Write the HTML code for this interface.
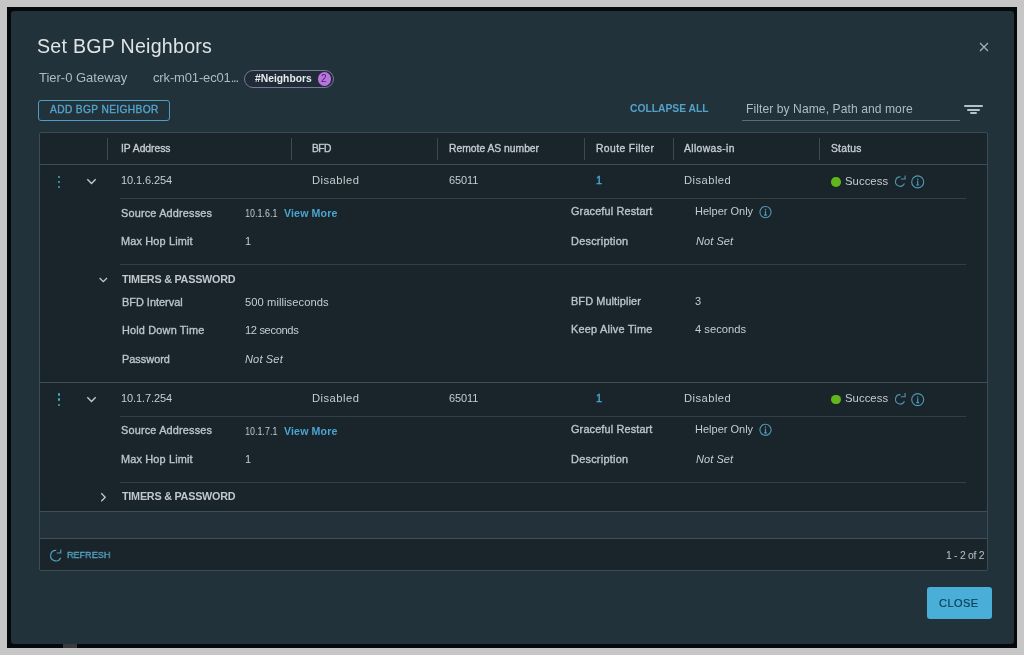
<!DOCTYPE html>
<html><head><meta charset="utf-8"><style>
html,body{margin:0;padding:0;}
body{width:1024px;height:655px;position:relative;overflow:hidden;background:#c6c6c6;font-family:"Liberation Sans",sans-serif;}
.t{position:absolute;line-height:1;white-space:nowrap;will-change:transform;}
.r{position:absolute;}
</style></head><body>
<div class="r" style="left:7px;top:7px;width:1010px;height:641px;background:#06090b;"></div>
<div class="r" style="left:11px;top:11px;width:1003px;height:632.5px;background:#22323a;border-radius:3px;"></div>
<div class="r" style="left:62.5px;top:643.5px;width:14.5px;height:4px;background:#3b3b3c;"></div>
<div class="t" style="left:37.00px;top:36.91px;font-size:19.6px;color:#dfe4e7;font-weight:normal;letter-spacing:0.268px;font-style:normal;">Set BGP Neighbors</div>
<div class="t" style="left:39.40px;top:70.80px;font-size:13px;color:#aebbc3;font-weight:normal;letter-spacing:-0.008px;font-style:normal;">Tier-0 Gateway</div>
<div class="t" style="left:153.00px;top:70.80px;font-size:13px;color:#aebbc3;font-weight:normal;letter-spacing:-0.15px;font-style:normal;">crk-m01-ec01<span style="letter-spacing:-1.2px">...</span></div>
<svg class="r" style="left:978px;top:41px" width="12" height="12" viewBox="0 0 12 12"><path d="M2 2L10 10M10 2L2 10" stroke="#a3b1b9" stroke-width="1.3"/></svg>
<div class="r" style="left:244px;top:69.5px;width:90px;height:18.5px;box-sizing:border-box;border:1px solid #7b7596;border-radius:10px;background:#1f2b36;"></div>
<div class="t" style="left:255.20px;top:74.48px;font-size:10.3px;color:#e8ecee;font-weight:bold;letter-spacing:0.017px;font-style:normal;">#Neighbors</div>
<div class="r" style="left:317.5px;top:72px;width:13.5px;height:13.5px;border-radius:50%;background:#b874dd;"></div>
<div class="t" style="left:320.80px;top:74.03px;font-size:10px;color:#4a1f70;font-weight:normal;letter-spacing:0px;font-style:normal;">2</div>
<div class="r" style="left:38px;top:99.5px;width:132px;height:21.5px;box-sizing:border-box;border:1px solid #4d9fc6;border-radius:3px;"></div>
<div class="t" style="left:49.80px;top:104.57px;font-size:10.2px;color:#55a3cb;font-weight:normal;letter-spacing:0.365px;font-style:normal;-webkit-text-stroke:0.5px #55a3cb;-webkit-text-stroke:0.35px #55a3cb;">ADD BGP NEIGHBOR</div>
<div class="t" style="left:630.30px;top:104.28px;font-size:10.3px;color:#52a2ca;font-weight:bold;letter-spacing:0.001px;font-style:normal;">COLLAPSE ALL</div>
<div class="t" style="left:746.40px;top:103.06px;font-size:12.1px;color:#b0bcc3;font-weight:normal;letter-spacing:0.074px;font-style:normal;">Filter by Name, Path and more</div>
<div class="r" style="left:742px;top:120px;width:218px;height:1px;background:#5d6c75;"></div>
<div class="r" style="left:964px;top:105px;width:19px;height:2px;background:#b6c1c7;border-radius:1px;"></div>
<div class="r" style="left:967px;top:108.7px;width:13px;height:2px;background:#b6c1c7;border-radius:1px;"></div>
<div class="r" style="left:970px;top:112.1px;width:7px;height:2px;background:#b6c1c7;border-radius:1px;"></div>
<div class="r" style="left:38.6px;top:132px;width:949.1999999999999px;height:439px;box-sizing:border-box;border:1px solid #3c4b54;border-radius:2px;background:#19242b;"></div>
<div class="r" style="left:40px;top:164px;width:947px;height:1px;background:#3f4e57;"></div>
<div class="r" style="left:107.2px;top:138px;width:1px;height:22px;background:#3a4952;"></div>
<div class="r" style="left:291.3px;top:138px;width:1px;height:22px;background:#3a4952;"></div>
<div class="r" style="left:437.4px;top:138px;width:1px;height:22px;background:#3a4952;"></div>
<div class="r" style="left:584.3px;top:138px;width:1px;height:22px;background:#3a4952;"></div>
<div class="r" style="left:673.2px;top:138px;width:1px;height:22px;background:#3a4952;"></div>
<div class="r" style="left:819.3px;top:138px;width:1px;height:22px;background:#3a4952;"></div>
<div class="t" style="left:121.00px;top:143.88px;font-size:10.3px;color:#c4ccd1;font-weight:normal;letter-spacing:-0.011px;font-style:normal;-webkit-text-stroke:0.35px #c4ccd1;">IP Address</div>
<div class="t" style="left:312.00px;top:143.88px;font-size:10.3px;color:#c4ccd1;font-weight:normal;letter-spacing:-0.525px;font-style:normal;-webkit-text-stroke:0.35px #c4ccd1;">BFD</div>
<div class="t" style="left:449.00px;top:143.88px;font-size:10.3px;color:#c4ccd1;font-weight:normal;letter-spacing:0.012px;font-style:normal;-webkit-text-stroke:0.35px #c4ccd1;">Remote AS number</div>
<div class="t" style="left:595.60px;top:143.88px;font-size:10.3px;color:#c4ccd1;font-weight:normal;letter-spacing:0.418px;font-style:normal;-webkit-text-stroke:0.35px #c4ccd1;">Route Filter</div>
<div class="t" style="left:684.00px;top:143.88px;font-size:10.3px;color:#c4ccd1;font-weight:normal;letter-spacing:0.393px;font-style:normal;-webkit-text-stroke:0.35px #c4ccd1;">Allowas-in</div>
<div class="t" style="left:831.00px;top:143.88px;font-size:10.3px;color:#c4ccd1;font-weight:normal;letter-spacing:0.25px;font-style:normal;-webkit-text-stroke:0.35px #c4ccd1;">Status</div>
<div class="r" style="left:57.8px;top:175.60px;width:2.3px;height:2.3px;border-radius:50%;background:#45a8bf;"></div>
<div class="r" style="left:57.8px;top:180.70px;width:2.3px;height:2.3px;border-radius:50%;background:#45a8bf;"></div>
<div class="r" style="left:57.8px;top:185.80px;width:2.3px;height:2.3px;border-radius:50%;background:#45a8bf;"></div>
<svg class="r" style="left:86px;top:177px" width="11" height="9" viewBox="0 0 11 9"><path d="M1.3 2.3L5.5 6.5L9.7 2.3" stroke="#c0cad0" stroke-width="1.4" fill="none"/></svg>
<div class="t" style="left:121.30px;top:175.09px;font-size:11px;color:#c5cdd2;font-weight:normal;letter-spacing:-0.097px;font-style:normal;">10.1.6.254</div>
<div class="t" style="left:312.10px;top:174.92px;font-size:11.2px;color:#c5cdd2;font-weight:normal;letter-spacing:0.476px;font-style:normal;">Disabled</div>
<div class="t" style="left:448.80px;top:175.09px;font-size:11px;color:#c5cdd2;font-weight:normal;letter-spacing:-0.114px;font-style:normal;">65011</div>
<div class="t" style="left:596.00px;top:175.09px;font-size:11px;color:#4aa9d6;font-weight:normal;letter-spacing:0px;font-style:normal;-webkit-text-stroke:0.35px #4aa9d6;">1</div>
<div class="t" style="left:684.00px;top:174.92px;font-size:11.2px;color:#c5cdd2;font-weight:normal;letter-spacing:0.462px;font-style:normal;">Disabled</div>
<div class="r" style="left:831px;top:177px;width:9.6px;height:9.6px;border-radius:50%;background:#62b61c;"></div>
<div class="t" style="left:844.50px;top:175.63px;font-size:11.3px;color:#c5cdd2;font-weight:normal;letter-spacing:0.064px;font-style:normal;">Success</div>
<svg class="r" style="left:891px;top:172px" width="18" height="18" viewBox="891 172 18 18"><path d="M904.46 183.59A4.7 4.7 0 1 1 900.50 176.90" stroke="#4f95b2" stroke-width="1.1" fill="none"/><path d="M901.00 179.00H905.10V175.40" stroke="#4f95b2" stroke-width="1.1" fill="none"/></svg>
<svg class="r" style="left:908px;top:172px" width="18" height="18" viewBox="908 172 18 18"><circle cx="917.7" cy="181.9" r="6.0" stroke="#4f9ab6" stroke-width="1.1" fill="none"/><circle cx="917.7" cy="179.20000000000002" r="0.75" fill="#4f9ab6"/><path d="M917.7 180.6V185.0M916.3000000000001 185.0H919.1" stroke="#4f9ab6" stroke-width="1.2" fill="none"/></svg>
<div class="r" style="left:120px;top:198px;width:846px;height:1px;background:#323f47;"></div>
<div class="t" style="left:121.20px;top:207.67px;font-size:10.9px;color:#bcc5ca;font-weight:normal;letter-spacing:0.173px;font-style:normal;-webkit-text-stroke:0.35px #bcc5ca;">Source Addresses</div>
<div class="t" style="left:245.20px;top:207.96px;font-size:10.8px;color:#c5cdd2;font-weight:normal;letter-spacing:0px;font-style:normal;transform:scaleX(0.8299);transform-origin:0.00px 0;">10.1.6.1</div>
<div class="t" style="left:283.90px;top:208.13px;font-size:10.6px;color:#4aa5d0;font-weight:bold;letter-spacing:0.143px;font-style:normal;">View More</div>
<div class="t" style="left:571.20px;top:205.97px;font-size:10.9px;color:#bcc5ca;font-weight:normal;letter-spacing:0.14px;font-style:normal;-webkit-text-stroke:0.35px #bcc5ca;">Graceful Restart</div>
<div class="t" style="left:694.60px;top:205.89px;font-size:11px;color:#c5cdd2;font-weight:normal;letter-spacing:0.002px;font-style:normal;">Helper Only</div>
<svg class="r" style="left:756px;top:203px" width="18" height="18" viewBox="756 203 18 18"><circle cx="765.5" cy="212.1" r="5.6" stroke="#4f9ab6" stroke-width="1.1" fill="none"/><circle cx="765.5" cy="209.4" r="0.75" fill="#4f9ab6"/><path d="M765.5 210.79999999999998V215.2M764.1 215.2H766.9" stroke="#4f9ab6" stroke-width="1.2" fill="none"/></svg>
<div class="t" style="left:121.20px;top:235.97px;font-size:10.9px;color:#bcc5ca;font-weight:normal;letter-spacing:0.167px;font-style:normal;-webkit-text-stroke:0.35px #bcc5ca;">Max Hop Limit</div>
<div class="t" style="left:245.20px;top:235.89px;font-size:11px;color:#c5cdd2;font-weight:normal;letter-spacing:0px;font-style:normal;">1</div>
<div class="t" style="left:571.20px;top:235.97px;font-size:10.9px;color:#bcc5ca;font-weight:normal;letter-spacing:0.265px;font-style:normal;-webkit-text-stroke:0.35px #bcc5ca;">Description</div>
<div class="t" style="left:695.90px;top:235.89px;font-size:11px;color:#c5cdd2;font-weight:normal;letter-spacing:0.072px;font-style:italic;">Not Set</div>
<div class="r" style="left:120px;top:264px;width:846px;height:1px;background:#323f47;"></div>
<div class="t" style="left:121.70px;top:274.16px;font-size:10.8px;color:#c0c8cd;font-weight:bold;letter-spacing:-0.237px;font-style:normal;">TIMERS &amp; PASSWORD</div>
<svg class="r" style="left:97.6px;top:274.6px" width="11" height="9" viewBox="0 0 11 9"><path d="M1.6 3L5.3 6.7L9 3" stroke="#c0cad0" stroke-width="1.3" fill="none"/></svg>
<div class="t" style="left:121.70px;top:296.87px;font-size:10.9px;color:#bcc5ca;font-weight:normal;letter-spacing:0.009px;font-style:normal;-webkit-text-stroke:0.35px #bcc5ca;">BFD Interval</div>
<div class="t" style="left:244.90px;top:296.62px;font-size:11.2px;color:#c5cdd2;font-weight:normal;letter-spacing:0.065px;font-style:normal;">500 milliseconds</div>
<div class="t" style="left:571.30px;top:296.37px;font-size:10.9px;color:#bcc5ca;font-weight:normal;letter-spacing:0.108px;font-style:normal;-webkit-text-stroke:0.35px #bcc5ca;">BFD Multiplier</div>
<div class="t" style="left:695.00px;top:296.29px;font-size:11px;color:#c5cdd2;font-weight:normal;letter-spacing:0px;font-style:normal;">3</div>
<div class="t" style="left:121.70px;top:324.77px;font-size:10.9px;color:#bcc5ca;font-weight:normal;letter-spacing:0.177px;font-style:normal;-webkit-text-stroke:0.35px #bcc5ca;">Hold Down Time</div>
<div class="t" style="left:244.90px;top:324.52px;font-size:11.2px;color:#c5cdd2;font-weight:normal;letter-spacing:-0.388px;font-style:normal;">12 seconds</div>
<div class="t" style="left:571.30px;top:324.37px;font-size:10.9px;color:#bcc5ca;font-weight:normal;letter-spacing:0.228px;font-style:normal;-webkit-text-stroke:0.35px #bcc5ca;">Keep Alive Time</div>
<div class="t" style="left:694.50px;top:324.12px;font-size:11.2px;color:#c5cdd2;font-weight:normal;letter-spacing:0.016px;font-style:normal;">4 seconds</div>
<div class="t" style="left:121.70px;top:354.27px;font-size:10.9px;color:#bcc5ca;font-weight:normal;letter-spacing:0.014px;font-style:normal;-webkit-text-stroke:0.35px #bcc5ca;">Password</div>
<div class="t" style="left:245.40px;top:354.19px;font-size:11px;color:#c5cdd2;font-weight:normal;letter-spacing:0.172px;font-style:italic;">Not Set</div>
<div class="r" style="left:40px;top:382px;width:947px;height:1px;background:#3f4e57;"></div>
<div class="r" style="left:57.8px;top:393.30px;width:2.3px;height:2.3px;border-radius:50%;background:#45a8bf;"></div>
<div class="r" style="left:57.8px;top:398.40px;width:2.3px;height:2.3px;border-radius:50%;background:#45a8bf;"></div>
<div class="r" style="left:57.8px;top:403.50px;width:2.3px;height:2.3px;border-radius:50%;background:#45a8bf;"></div>
<svg class="r" style="left:86px;top:394.7px" width="11" height="9" viewBox="0 0 11 9"><path d="M1.3 2.3L5.5 6.5L9.7 2.3" stroke="#c0cad0" stroke-width="1.4" fill="none"/></svg>
<div class="t" style="left:121.30px;top:392.79px;font-size:11px;color:#c5cdd2;font-weight:normal;letter-spacing:-0.097px;font-style:normal;">10.1.7.254</div>
<div class="t" style="left:312.10px;top:392.62px;font-size:11.2px;color:#c5cdd2;font-weight:normal;letter-spacing:0.476px;font-style:normal;">Disabled</div>
<div class="t" style="left:448.80px;top:392.79px;font-size:11px;color:#c5cdd2;font-weight:normal;letter-spacing:-0.114px;font-style:normal;">65011</div>
<div class="t" style="left:596.00px;top:392.79px;font-size:11px;color:#4aa9d6;font-weight:normal;letter-spacing:0px;font-style:normal;-webkit-text-stroke:0.35px #4aa9d6;">1</div>
<div class="t" style="left:684.00px;top:392.62px;font-size:11.2px;color:#c5cdd2;font-weight:normal;letter-spacing:0.462px;font-style:normal;">Disabled</div>
<div class="r" style="left:831px;top:394.7px;width:9.6px;height:9.6px;border-radius:50%;background:#62b61c;"></div>
<div class="t" style="left:844.50px;top:393.33px;font-size:11.3px;color:#c5cdd2;font-weight:normal;letter-spacing:0.064px;font-style:normal;">Success</div>
<svg class="r" style="left:891px;top:390px" width="18" height="18" viewBox="891 390 18 18"><path d="M904.46 401.29A4.7 4.7 0 1 1 900.50 394.60" stroke="#4f95b2" stroke-width="1.1" fill="none"/><path d="M901.00 396.70H905.10V393.10" stroke="#4f95b2" stroke-width="1.1" fill="none"/></svg>
<svg class="r" style="left:908px;top:390px" width="18" height="18" viewBox="908 390 18 18"><circle cx="917.7" cy="399.6" r="6.0" stroke="#4f9ab6" stroke-width="1.1" fill="none"/><circle cx="917.7" cy="396.90000000000003" r="0.75" fill="#4f9ab6"/><path d="M917.7 398.3V402.70000000000005M916.3000000000001 402.70000000000005H919.1" stroke="#4f9ab6" stroke-width="1.2" fill="none"/></svg>
<div class="r" style="left:120px;top:415.7px;width:846px;height:1px;background:#323f47;"></div>
<div class="t" style="left:121.20px;top:425.37px;font-size:10.9px;color:#bcc5ca;font-weight:normal;letter-spacing:0.173px;font-style:normal;-webkit-text-stroke:0.35px #bcc5ca;">Source Addresses</div>
<div class="t" style="left:245.20px;top:425.66px;font-size:10.8px;color:#c5cdd2;font-weight:normal;letter-spacing:0px;font-style:normal;transform:scaleX(0.8299);transform-origin:0.00px 0;">10.1.7.1</div>
<div class="t" style="left:283.90px;top:425.83px;font-size:10.6px;color:#4aa5d0;font-weight:bold;letter-spacing:0.143px;font-style:normal;">View More</div>
<div class="t" style="left:571.20px;top:423.67px;font-size:10.9px;color:#bcc5ca;font-weight:normal;letter-spacing:0.14px;font-style:normal;-webkit-text-stroke:0.35px #bcc5ca;">Graceful Restart</div>
<div class="t" style="left:694.60px;top:423.59px;font-size:11px;color:#c5cdd2;font-weight:normal;letter-spacing:0.002px;font-style:normal;">Helper Only</div>
<svg class="r" style="left:756px;top:420px" width="18" height="18" viewBox="756 420 18 18"><circle cx="765.5" cy="429.79999999999995" r="5.6" stroke="#4f9ab6" stroke-width="1.1" fill="none"/><circle cx="765.5" cy="427.09999999999997" r="0.75" fill="#4f9ab6"/><path d="M765.5 428.49999999999994V432.9M764.1 432.9H766.9" stroke="#4f9ab6" stroke-width="1.2" fill="none"/></svg>
<div class="t" style="left:121.20px;top:453.67px;font-size:10.9px;color:#bcc5ca;font-weight:normal;letter-spacing:0.167px;font-style:normal;-webkit-text-stroke:0.35px #bcc5ca;">Max Hop Limit</div>
<div class="t" style="left:245.20px;top:453.59px;font-size:11px;color:#c5cdd2;font-weight:normal;letter-spacing:0px;font-style:normal;">1</div>
<div class="t" style="left:571.20px;top:453.67px;font-size:10.9px;color:#bcc5ca;font-weight:normal;letter-spacing:0.265px;font-style:normal;-webkit-text-stroke:0.35px #bcc5ca;">Description</div>
<div class="t" style="left:695.90px;top:453.59px;font-size:11px;color:#c5cdd2;font-weight:normal;letter-spacing:0.072px;font-style:italic;">Not Set</div>
<div class="r" style="left:120px;top:481.7px;width:846px;height:1px;background:#323f47;"></div>
<div class="t" style="left:121.70px;top:490.86px;font-size:10.8px;color:#c0c8cd;font-weight:bold;letter-spacing:-0.237px;font-style:normal;">TIMERS &amp; PASSWORD</div>
<svg class="r" style="left:97.5px;top:491.2px" width="10" height="12" viewBox="0 0 10 12"><path d="M3.3 2.2L7.2 6.2L3.3 10.2" stroke="#c0cad0" stroke-width="1.3" fill="none"/></svg>
<div class="r" style="left:40px;top:511px;width:947px;height:27px;background:#22313a;"></div>
<div class="r" style="left:40px;top:510.5px;width:947px;height:1px;background:#3f4e57;"></div>
<div class="r" style="left:40px;top:538px;width:947px;height:1px;background:#3f4e57;"></div>
<svg class="r" style="left:46px;top:546px" width="18" height="18" viewBox="46 546 18 18"><path d="M60.70 557.84A5.3 5.3 0 1 1 56.20 550.30" stroke="#4f9dbb" stroke-width="1.2" fill="none"/><path d="M56.70 553.00H60.80V549.40" stroke="#4f9dbb" stroke-width="1.2" fill="none"/></svg>
<div class="t" style="left:66.60px;top:550.40px;font-size:9.8px;color:#55a2c2;font-weight:normal;letter-spacing:0px;font-style:normal;transform:scaleX(0.9265);transform-origin:0.00px 0;-webkit-text-stroke:0.35px #55a2c2;">REFRESH</div>
<div class="t" style="left:945.80px;top:551.00px;font-size:10.4px;color:#b7c2c8;font-weight:normal;letter-spacing:-0.281px;font-style:normal;">1 - 2 of 2</div>
<div class="r" style="left:927px;top:587px;width:64.5px;height:31.5px;background:#49afd9;border-radius:3px;"></div>
<div class="t" style="left:939.00px;top:597.99px;font-size:11.0px;color:#0e3b54;font-weight:normal;letter-spacing:0.478px;font-style:normal;-webkit-text-stroke:0.2px #0e3b54;">CLOSE</div>
</body></html>
